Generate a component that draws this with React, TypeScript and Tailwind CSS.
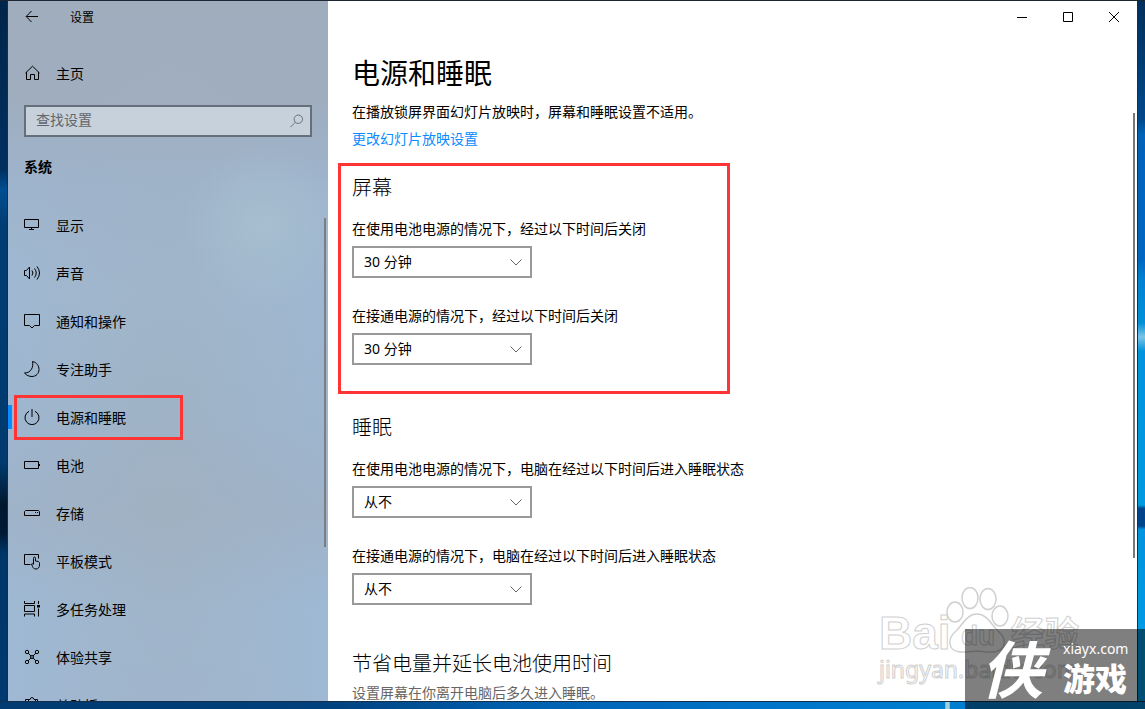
import { FC, ReactNode, useState } from "react";

const Icon: FC<{ children: ReactNode; className?: string }> = ({
  children,
  className = "size-4",
}) => (
  <svg
    viewBox="0 0 16 16"
    className={`shrink-0 overflow-visible ${className}`}
    fill="none"
    stroke="currentColor"
    strokeWidth="1"
    aria-hidden="true"
  >
    {children}
  </svg>
);

type NavItem = { label: string; icon: ReactNode };

const navItems: NavItem[] = [
  {
    label: "显示",
    icon: <path d="M.5 2.500h14v8H.5zM7.500 10.500v2M5 12.500h5" />,
  },
  {
    label: "声音",
    icon: (
      <path d="M.5 5.500h2l3-3.500v12l-3-3.500h-2zM8 5.500q1.800 2.500 0 5M10.500 3.500q3.500 4.500 0 9M13 1.500q5 6.500 0 13" />
    ),
  },
  {
    label: "通知和操作",
    icon: <path d="M.5 1.500h15v11h-5l-2.500 2.500-2.500-2.500h-5z" />,
  },
  {
    label: "专注助手",
    icon: <path d="M8.500.500C13 1.500 15 5 15 8.500c0 4-3 7-7 7-3 0-5.500-1.200-7.500-3.500C7 12 9.800 6 8.500.500z" />,
  },
  {
    label: "电源和睡眠",
    icon: <path d="M8 0v8M5 2.300a7 7 0 1 0 6 0" />,
  },
  {
    label: "电池",
    icon: <path d="M.5 4.500h14v7H.5zM15.500 7v2" />,
  },
  {
    label: "存储",
    icon: <path d="M1.500 5.500h13l1 1v4h-15v-4zM11 7.500h1M13 7.500h1" />,
  },
  {
    label: "平板模式",
    icon: (
      <path d="M6.500 11.500h-6v-10h14v4M9.500 11V5.500q0-1.500 1-1.500t1 1.500V8l3 .500q1 .500 1 2v1.500c0 2.500-1.500 4-3.500 4s-3-1-3.500-2.500l-1-2.500q.500-1 2 .500" />
    ),
  },
  {
    label: "多任务处理",
    icon: (
      <>
        <path d="M.5 0v2.500h10V0M.5 15.500v-2.500h10v2.500M.5 4.500h10v6H.5zM14.500 0v3M14.500 7.500v8" />
        <path d="M13 4h3v2.500h-3z" fill="currentColor" stroke="none" />
      </>
    ),
  },
  {
    label: "体验共享",
    icon: (
      <>
        <circle cx="3" cy="3" r="1.700" />
        <circle cx="13" cy="3" r="1.700" />
        <circle cx="3" cy="13" r="1.700" />
        <circle cx="13" cy="13" r="1.700" />
        <circle cx="8" cy="8" r="1.500" />
        <path d="M4.200 4.200l3 3M11.800 4.200l-3 3M4.200 11.800l3-3M11.800 11.800l-3-3" />
      </>
    ),
  },
  {
    label: "剪贴板",
    icon: <path d="M4.500 4.500v-2H6q.500-2 2-2t2 2h1.500v2zM4.500 2.500h-3v13h12v-13h-2" />,
  },
];

const TimeSelect: FC<{ id: string; label: string; initial: string }> = ({
  id,
  label,
  initial,
}) => {
  const [value, setValue] = useState(initial);
  return (
    <div>
      <label htmlFor={id} className="block text-sm leading-5">
        {label}
      </label>
      <div className="relative mt-[7px] w-[180px]">
        <select
          id={id}
          value={value}
          onChange={(e) => setValue(e.target.value)}
          className="block h-8 w-full appearance-none border-2 border-[#999999] bg-white pl-[10px] text-sm outline-none"
        >
          <option>30 分钟</option>
          <option>1 小时</option>
          <option>从不</option>
        </select>
        <svg
          viewBox="0 0 12 7"
          className="pointer-events-none absolute top-[13px] right-[10px] h-[7px] w-3"
          fill="none"
          stroke="#666"
          aria-hidden="true"
        >
          <path d="M.5.500 6 6 11.500.500" />
        </svg>
      </div>
    </div>
  );
};

const Sidebar: FC = () => (
  <aside className="relative flex w-80 shrink-0 flex-col overflow-hidden bg-[radial-gradient(circle_at_80%_32%,#abc4d2a0_0,#abc4d200_80px),radial-gradient(ellipse_at_50%_71%,#a2b0bd90_0,#a2b0bd00_170px),linear-gradient(#a0adbd_0%,#9fadbf_14%,#9eb4cc_26%,#9fb8d1_42%,#9db6cf_60%,#9fb3c9_73%,#9eb9d4_87%,#9fb8d3_100%)]">
    <div className="flex h-8 shrink-0 items-center">
      <button type="button" aria-label="返回" className="flex h-8 w-12 items-center justify-center">
        <Icon>
          <path d="M14 7.500H2.500M7.500 2 2.200 7.500l5.300 5.500" />
        </Icon>
      </button>
      <span className="ml-[14px] pt-0.5 text-xs">设置</span>
    </div>

    <a href="#home" className="mt-4 flex h-12 shrink-0 items-center gap-4 px-4 text-sm">
      <Icon>
        <path d="M1.500 8 8.500 1.200 15.500 8M2.500 7v7.500h4v-5h4v5h4V7" />
      </Icon>
      <span className="pt-0.5">主页</span>
    </a>

    <div className="mx-4 mt-2 flex h-8 shrink-0 items-center border-2 border-[#666f79] bg-[#c7d1db] pr-1.5 pl-[10px]">
      <input
        type="text"
        aria-label="查找设置"
        placeholder="查找设置"
        className="min-w-0 flex-1 bg-transparent pb-0.5 text-sm outline-none placeholder:text-[#60666d]"
      />
      <Icon className="size-[14px] text-[#5d646b]">
        <circle cx="9.500" cy="6" r="4.800" />
        <path d="M6 9.500.500 15" />
      </Icon>
    </div>

    <h2 className="mt-5 ml-4 shrink-0 text-sm leading-5 font-bold">系统</h2>

    <nav className="mt-6 flex min-h-0 flex-1 flex-col overflow-hidden">
      {navItems.map((item) => {
        const active = item.label === "电源和睡眠";
        return (
          <a
            key={item.label}
            href={`#${item.label}`}
            aria-current={active ? "page" : undefined}
            className="relative flex h-12 shrink-0 items-center gap-4 px-4 text-sm"
          >
            {active && (
              <>
                <span className="absolute top-3 left-0 h-6 w-1 bg-[#0a8cff]" />
                <span className="absolute top-[2px] left-[6px] h-[45px] w-[169px] border-[3px] border-[#ff3535]" />
              </>
            )}
            <Icon>{item.icon}</Icon>
            <span className="pt-0.5">{item.label}</span>
          </a>
        );
      })}
    </nav>

    <span className="absolute top-[31%] right-[2px] h-[47%] w-[2px] bg-[#7c7f82]" />
  </aside>
);

const WindowControls: FC = () => (
  <div className="flex h-8 shrink-0 justify-end">
    <button type="button" aria-label="最小化" className="flex w-[46px] items-center justify-center">
      <svg viewBox="0 0 10 10" className="size-[10px]" stroke="#000" aria-hidden="true">
        <path d="M0 5.500h10" />
      </svg>
    </button>
    <button type="button" aria-label="最大化" className="flex w-[46px] items-center justify-center">
      <svg viewBox="0 0 10 10" className="size-[10px]" stroke="#000" fill="none" aria-hidden="true">
        <path d="M.5.500h9v9h-9z" />
      </svg>
    </button>
    <button type="button" aria-label="关闭" className="flex w-[46px] items-center justify-center">
      <svg viewBox="0 0 10 10" className="size-[10px]" stroke="#000" aria-hidden="true">
        <path d="m0 0 10 10M10 0 0 10" />
      </svg>
    </button>
  </div>
);

const Watermark: FC = () => (
  <div
    aria-hidden="true"
    className="pointer-events-none absolute right-[46px] bottom-2 h-[106px] w-[212px] font-bold text-white [-webkit-text-stroke:1px_#d0d0d0]"
  >
    <span className="absolute top-[22px] left-0 font-['Liberation_Sans'] text-[46px] leading-[48px]">
      Bai
    </span>
    <svg viewBox="0 0 70 70" className="absolute top-0 left-[64px] size-[70px]" fill="#fff" stroke="#d0d0d0" strokeWidth="1.500">
      <ellipse cx="12" cy="25" rx="8" ry="10" />
      <ellipse cx="27" cy="11" rx="8" ry="10.500" />
      <ellipse cx="45" cy="12" rx="8" ry="10.500" />
      <ellipse cx="57" cy="29" rx="8" ry="10" />
      <path d="M34 27c10 0 14 10 20 16 7 6 9 12 6 17-4 7-13 5-26 4-13 1-22 3-26-4-3-6 0-12 6-17 6-6 10-16 20-16z" />
    </svg>
    <span className="absolute top-[33px] left-[82px] font-['Liberation_Sans'] text-[28px] leading-8">
      du
    </span>
    <span className="absolute top-[26px] left-[132px] text-[34px] leading-10">经验</span>
    <span className="absolute top-[68px] left-0 text-[23px] leading-7 font-normal whitespace-nowrap">
      jingyan.baidu.com
    </span>
  </div>
);

const PowerSettings: FC = () => (
  <main className="relative flex min-w-0 flex-1 flex-col overflow-hidden bg-white">
    <WindowControls />
    <div className="min-h-0 flex-1 overflow-hidden pt-[23px] pl-6">
      <h1 className="text-[28px] leading-[34px]">电源和睡眠</h1>
      <p className="mt-3 text-sm leading-5">
        在播放锁屏界面幻灯片放映时，屏幕和睡眠设置不适用。
      </p>
      <a href="#slideshow" className="mt-[7px] block w-fit text-sm leading-5 text-[#0a8cff]">
        更改幻灯片放映设置
      </a>

      <section className="relative mt-6">
        <span className="pointer-events-none absolute -top-[10px] -left-[14px] h-[231px] w-[392px] border-[3px] border-[#ff3535]" />
        <h2 className="text-xl leading-[30px] font-light">屏幕</h2>
        <div className="mt-4 flex flex-col gap-7">
          <TimeSelect
            id="screen-battery"
            label="在使用电池电源的情况下，经过以下时间后关闭"
            initial="30 分钟"
          />
          <TimeSelect
            id="screen-plugged"
            label="在接通电源的情况下，经过以下时间后关闭"
            initial="30 分钟"
          />
        </div>
      </section>

      <section className="mt-12">
        <h2 className="text-xl leading-[30px] font-light">睡眠</h2>
        <div className="mt-4 flex flex-col gap-7">
          <TimeSelect
            id="sleep-battery"
            label="在使用电池电源的情况下，电脑在经过以下时间后进入睡眠状态"
            initial="从不"
          />
          <TimeSelect
            id="sleep-plugged"
            label="在接通电源的情况下，电脑在经过以下时间后进入睡眠状态"
            initial="从不"
          />
        </div>
      </section>

      <section className="mt-11">
        <h2 className="text-xl leading-[30px] font-light">节省电量并延长电池使用时间</h2>
        <p className="mt-1 text-sm leading-5 text-[#666]">
          设置屏幕在你离开电脑后多久进入睡眠。
        </p>
      </section>
    </div>

    <Watermark />
    <span className="absolute top-[16%] right-[2px] h-[445px] w-[2px] bg-[#7a7a7a]" />
  </main>
);

const SiteBadge: FC = () => (
  <div className="absolute right-0 bottom-0 flex h-20 w-[180px] items-center bg-black/50 pl-4 text-white">
    <span className="w-[82px] shrink-0 text-[62px] leading-[72px] font-bold italic">侠</span>
    <div className="whitespace-nowrap">
      <p className="text-sm leading-5">xiayx.com</p>
      <p className="text-[32px] leading-10 font-black">游戏</p>
    </div>
  </div>
);

const App: FC = () => (
  <div className="relative flex h-screen flex-col overflow-hidden bg-[#1d2733] pt-px font-['Noto_Sans','Noto_Sans_CJK_SC',sans-serif] text-black">
    <div className="flex min-h-0 flex-1">
      <div className="w-2 shrink-0 border-r border-[#12304c] bg-[linear-gradient(#00254a_0%,#002f5e_24%,#004f91_27%,#003d73_32%,#003a6e_66%,#00182f_72%,#001a35_76%,#003668_79%,#003a70_100%)]" />
      <Sidebar />
      <PowerSettings />
      <div className="w-2 shrink-0 border-l border-[#12304c] bg-[linear-gradient(#002f5c_0%,#00498c_17%,#0063b8_19%,#0067c0_37%,#0083d0_40%,#0090d8_46%,#7cc4e8_48%,#0094dc_50%,#009ade_72%,#00458c_72.500%,#00458c_75%,#0094dc_75.500%,#009fe6_100%)]" />
    </div>
    <div className="h-2 shrink-0 border-t border-[#12304c] bg-[linear-gradient(90deg,#003a70_0%,#00407c_28%,#005fae_45%,#0073c8_65%,#007fd0_82.500%,#9fd0dc_82.600%,#9fd0dc_82.900%,#007fd0_83%,#0084d4_100%)]" />
    <SiteBadge />
  </div>
);

export default App;
